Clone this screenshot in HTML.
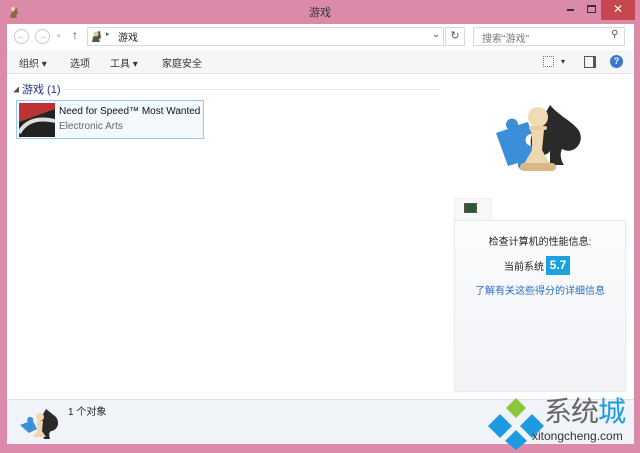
<!DOCTYPE html>
<html><head><meta charset="utf-8"><style>
*{margin:0;padding:0;box-sizing:border-box}
body{width:640px;height:450px;background:#db8aaa;font-family:"Liberation Sans","Noto Sans CJK SC",sans-serif;font-size:10px;color:#222;position:relative;overflow:hidden}
.a{position:absolute}
</style></head><body>
<div class="a" style="left:8px;top:4px;width:10px;height:14px"><svg width="12" height="16"><path d="M2 14h7l-1-3 2-1-1-6-3 1-1 3-2 1z" fill="#8a6a40"/><circle cx="5" cy="5" r="2" fill="#f0d8a8"/></svg></div>
<div class="a" style="left:0;top:4px;width:640px;text-align:center;font-size:11px;color:#333">游戏</div>
<div class="a" style="left:567px;top:9px;width:7px;height:2px;background:#333"></div>
<div class="a" style="left:587px;top:5px;width:9px;height:8px;border:1px solid #333;border-top-width:2px"></div>
<div class="a" style="left:601px;top:0;width:34px;height:20px;background:#c7474e;color:#fff;text-align:center;font-size:12px;line-height:19px">✕</div>
<div class="a" style="left:7px;top:24px;width:627px;height:420px;background:#fff"></div>
<div class="a" style="left:14px;top:29px;width:15px;height:15px;border:1px solid #ccc;border-radius:50%;color:#bbb;font-size:10px;text-align:center;line-height:13px">←</div>
<div class="a" style="left:35px;top:29px;width:15px;height:15px;border:1px solid #ccc;border-radius:50%;color:#bbb;font-size:10px;text-align:center;line-height:13px">→</div>
<div class="a" style="left:57px;top:32px;color:#bbb;font-size:7px">▾</div>
<div class="a" style="left:72px;top:28px;color:#444;font-size:12px">↑</div>
<div class="a" style="left:87px;top:27px;width:357px;height:19px;border:1px solid #d9d9d9"></div>
<div class="a" style="left:90px;top:29px;width:12px;height:14px"><svg width="12" height="14"><path d="M2 13h8l-1-3 2-1-1-7-3 1-1 3-3 2z" fill="#555"/><circle cx="6" cy="5" r="2.5" fill="#e8c890"/></svg></div>
<div class="a" style="left:106px;top:30px;font-size:7px;color:#555">▸</div>
<div class="a" style="left:118px;top:29px">游戏</div>
<div class="a" style="left:432px;top:29px;color:#555">⌄</div>
<div class="a" style="left:445px;top:27px;width:20px;height:19px;border:1px solid #d9d9d9;color:#555;text-align:center;line-height:17px;font-size:11px">↻</div>
<div class="a" style="left:473px;top:27px;width:152px;height:19px;border:1px solid #d9d9d9;color:#777;padding:2px 8px">搜索"游戏"</div>
<div class="a" style="left:611px;top:29px;color:#555;font-size:10px">⚲</div>
<div class="a" style="left:7px;top:50px;width:627px;height:24px;background:#f5f6f7;border-bottom:1px solid #e5e5e5"></div>
<div class="a" style="left:19px;top:55px;color:#333">组织 ▾</div>
<div class="a" style="left:70px;top:55px;color:#333">选项</div>
<div class="a" style="left:110px;top:55px;color:#333">工具 ▾</div>
<div class="a" style="left:162px;top:55px;color:#333">家庭安全</div>
<div class="a" style="left:543px;top:56px;width:11px;height:11px;border:1px dotted #777"></div>
<div class="a" style="left:561px;top:57px;font-size:8px;color:#333">▾</div>
<div class="a" style="left:584px;top:56px;width:12px;height:12px;border:1px solid #555;border-right-width:3px"></div>
<div class="a" style="left:610px;top:55px;width:13px;height:13px;border-radius:50%;background:#3a78d0;color:#fff;font-size:9px;text-align:center;line-height:13px;font-weight:bold">?</div>
<div class="a" style="left:13px;top:85px;font-size:6px;color:#555">◢</div>
<div class="a" style="left:22px;top:81px;font-size:11px;color:#1e3287">游戏 (1)</div>
<div class="a" style="left:63px;top:89px;width:377px;height:1px;background:#e2e6ee"></div>
<div class="a" style="left:16px;top:100px;width:188px;height:39px;border:1px solid #99c9ef;background:#f4f9fe"></div>
<div class="a" style="left:19px;top:103px;width:36px;height:34px;background:linear-gradient(160deg,#b33 0 40%,#222 41% 100%)"><svg width="36" height="34"><path d="M0 30 Q10 12 36 18" stroke="#ddd" stroke-width="4" fill="none"/></svg></div>
<div class="a" style="left:59px;top:106px;font-size:10px;color:#111">Need for Speed™ Most Wanted</div>
<div class="a" style="left:59px;top:121px;font-size:10px;color:#666">Electronic Arts</div>
<div class="a" style="left:488px;top:93px;width:100px;height:90px"><svg width="100" height="90">
<path d="M62 12 C54 28 38 40 44 56 C48 64 58 64 62 58 L62 72 L76 72 C72 66 72 60 74 56 C84 62 96 52 92 40 C88 30 72 24 62 12z" fill="#2a2a2a"/>
<path d="M8 40 l12-4 a6 6 0 1 1 10-4 l10-3 4 12 a6 6 0 1 0 4 10 l4 12 -12 4 a6 6 0 1 1-10 3 l-10 3z" fill="#3a8fd8"/>
<circle cx="50" cy="24" r="10" fill="#f1dbb5"/><rect x="41" y="33" width="18" height="4" rx="2" fill="#e6cca0"/>
<path d="M44 37h12l-2 20 8 14 H36 l8-14z" fill="#eed6ae"/><rect x="32" y="70" width="36" height="8" rx="4" fill="#d8b887"/></svg></div>
<div class="a" style="left:454px;top:198px;width:38px;height:24px;background:#f6f7f9;border:1px solid #eceef2;border-bottom:none"></div>
<div class="a" style="left:464px;top:203px;width:13px;height:10px;background:#2d5a30;border:1px solid #555"></div>
<div class="a" style="left:454px;top:220px;width:172px;height:172px;background:linear-gradient(#fcfcfd,#f1f3f7);border:1px solid #e8eaee"></div>
<div class="a" style="left:454px;top:233px;width:172px;text-align:center;color:#222">检查计算机的性能信息:</div>
<div class="a" style="left:504px;top:258px;color:#222">当前系统</div>
<div class="a" style="left:546px;top:256px;width:24px;height:19px;background:#1aa3e0;color:#fff;font-weight:bold;font-size:12px;text-align:center;line-height:19px">5.7</div>
<div class="a" style="left:454px;top:282px;width:172px;text-align:center;color:#2a6fc4">了解有关这些得分的详细信息</div>
<div class="a" style="left:7px;top:399px;width:627px;height:45px;background:#f0f3f8;border-top:1px solid #dde3ec"></div>
<div class="a" style="left:18px;top:405px;width:42px;height:36px"><svg width="42" height="36"><path d="M28 4 C22 14 18 20 24 28 L26 34 H32 C30 28 32 26 34 26 C40 24 42 18 38 12z" fill="#2a2a2a"/><path d="M2 20 l8-3 a3 3 0 1 1 5-1 l4 8 -8 4z" fill="#3a8fd8"/><circle cx="22" cy="12" r="4" fill="#f1dbb5"/><path d="M19 16h6l-1 10 4 6H15l4-6z" fill="#eed6ae"/></svg></div>
<div class="a" style="left:68px;top:403px;color:#222">1 个对象</div>
<div class="a" style="left:486px;top:396px;width:60px;height:54px"><svg width="60" height="54"><path d="M30 2l10 10-10 10-10-10z" fill="#8cc63f"/><path d="M14 18l12 12-12 12L2 30z" fill="#1e9be0"/><path d="M46 18l12 12-12 12-12-12z" fill="#1e9be0"/><path d="M30 34l11 11-11 9-11-9z" fill="#1e9be0"/></svg></div>
<div class="a" style="left:544px;top:396px;font-size:28px;line-height:32px;color:#666;letter-spacing:-1px">系统<span style="color:#1e9be0">城</span></div>
<div class="a" style="left:532px;top:429px;font-size:12px;color:#333">xitongcheng.com</div>
</body></html>
